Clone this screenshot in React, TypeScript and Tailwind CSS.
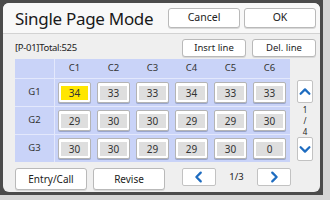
import React from 'react';

const rows = [
  { g: 'G1', v: [34, 33, 33, 34, 33, 33] },
  { g: 'G2', v: [29, 30, 30, 29, 29, 30] },
  { g: 'G3', v: [30, 30, 29, 29, 30, 0] },
];

const font = { fontFamily: '"Noto Sans", "Open Sans", sans-serif' };

const Btn = ({ label, className }: { label: string; className: string }) => (
  <div
    className={`flex items-center justify-center whitespace-nowrap bg-white border border-[#b9b9b9] rounded-[3px] text-[#222] shadow-[0_1px_0_#d8d8d8] ${className}`}
  >
    {label}
  </div>
);

const Chevron = ({ dir }: { dir: 'up' | 'down' | 'left' | 'right' }) => {
  const d = {
    up: 'M3 10 L8 5 L13 10',
    down: 'M3 6 L8 11 L13 6',
    left: 'M10 3 L5 8 L10 13',
    right: 'M6 3 L11 8 L6 13',
  }[dir];
  return (
    <svg width="14" height="14" viewBox="0 0 16 16">
      <path d={d} fill="none" stroke="#1e6cc0" strokeWidth="2.6" strokeLinecap="round" strokeLinejoin="round" />
    </svg>
  );
};

const Cell = ({ n, hi }: { n: number; hi?: boolean }) => (
  <div className="w-[33px] h-[21px] bg-white border border-[#b4b4b4] rounded-[2px] flex items-center justify-center shadow-[0_1px_0_#9aa6cc]">
    <div
      className={`w-[27px] h-[14px] flex items-center justify-center text-[10px] leading-none text-[#333] ${
        hi ? 'bg-[#ffe600]' : 'bg-[#dedede]'
      }`}
    >
      {n}
    </div>
  </div>
);

export default function App() {
  return (
    <div className="w-[330px] h-[200px] bg-[#d6d6d6]" style={font}>
      <div className="w-[323px] h-[195px] bg-[#4b4b4b] p-[3px]">
        <div className="w-[317px] h-[189px] bg-[#efefef] rounded-[6px] overflow-hidden flex flex-col">
          {/* Header */}
          <div className="h-[31px] bg-[#f8f8f8] border-b border-[#d2d2d2] flex items-center pl-[12px] pr-[4px]">
            <div className="text-[17px] text-[#1a1a1a] tracking-[-0.3px] leading-none flex-1">Single Page Mode</div>
            <Btn label="Cancel" className="w-[72px] h-[20px] text-[10.5px]" />
            <Btn label="OK" className="w-[72px] h-[20px] text-[10.5px] ml-[4px]" />
          </div>

          {/* Info row */}
          <div className="flex items-center h-[20px] mt-[4px] pl-[12px] pr-[4px]">
            <div className="text-[9.5px] text-[#222] tracking-[-0.3px] flex-1">[P-01]Total:525</div>
            <Btn label="Insrt line" className="w-[64px] h-[18px] text-[9.5px]" />
            <Btn label="Del. line" className="w-[64px] h-[18px] text-[9.5px] ml-[6px]" />
          </div>

          {/* Table + nav */}
          <div className="flex mt-[1px] pl-[12px]">
            <div className="w-[275px] bg-[#c9d3f8]">
              <div className="grid grid-cols-[40px_repeat(6,39px)] h-[19px] text-[9.5px] text-[#333]">
                <div className="border-r border-[#e3e8fc]" />
                {['C1', 'C2', 'C3', 'C4', 'C5', 'C6'].map((c) => (
                  <div key={c} className="flex items-center justify-center">
                    {c}
                  </div>
                ))}
              </div>
              {rows.map((r) => (
                <div
                  key={r.g}
                  className="grid grid-cols-[40px_repeat(6,39px)] h-[28px] border-t border-[#e3e8fc] text-[9.5px] text-[#333]"
                >
                  <div className="border-r border-[#e3e8fc] flex items-center justify-center">{r.g}</div>
                  {r.v.map((n, i) => (
                    <div key={i} className="flex items-center justify-center">
                      <Cell n={n} hi={r.g === 'G1' && i === 0} />
                    </div>
                  ))}
                </div>
              ))}
            </div>
            <div className="w-[16px] ml-[7px] flex flex-col items-center pt-[21px]">
              <div className="w-[16px] h-[23px] bg-white border border-[#c2c2c2] rounded-[2px] flex items-center justify-center">
                <Chevron dir="up" />
              </div>
              <div className="flex flex-col items-center text-[8px] leading-[11px] text-[#222] h-[34px] justify-center">
                <span>1</span>
                <span>/</span>
                <span>4</span>
              </div>
              <div className="w-[16px] h-[24px] bg-white border border-[#c2c2c2] rounded-[2px] flex items-center justify-center">
                <Chevron dir="down" />
              </div>
            </div>
          </div>

          {/* Bottom row */}
          <div className="flex items-start mt-[6px] pl-[12px]">
            <Btn label="Entry/Call" className="w-[72px] h-[22px] text-[10px]" />
            <Btn label="Revise" className="w-[72px] h-[22px] text-[10px] ml-[6px]" />
            <div className="w-[34px] h-[18px] bg-white border border-[#c2c2c2] rounded-[2px] flex items-center justify-center ml-[17px]">
              <Chevron dir="left" />
            </div>
            <div className="w-[41px] h-[18px] flex items-center justify-center text-[9.5px] text-[#222]">1/3</div>
            <div className="w-[34px] h-[18px] bg-white border border-[#c2c2c2] rounded-[2px] flex items-center justify-center">
              <Chevron dir="right" />
            </div>
          </div>
        </div>
      </div>
    </div>
  );
}
